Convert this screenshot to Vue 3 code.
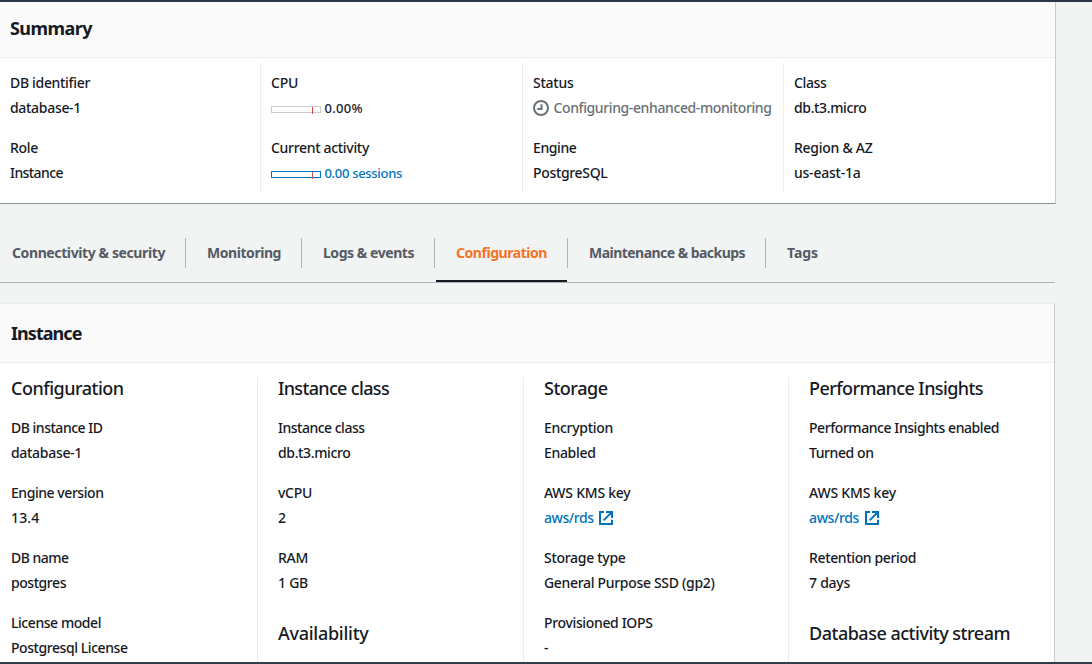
<script setup>
const summary = [
  [
    { label: 'DB identifier', lw: 80, value: 'database-1', vw: 71 },
    { label: 'Role', lw: 28, value: 'Instance', vw: 53 },
  ],
  [
    { label: 'CPU', lw: 27, value: '0.00%', vw: 38.5, kind: 'meter' },
    { label: 'Current activity', lw: 98, value: '0.00 sessions', vw: 77.5, kind: 'meter', link: true },
  ],
  [
    { label: 'Status', lw: 40.5, value: 'Configuring-enhanced-monitoring', vw: 218, kind: 'pending' },
    { label: 'Engine', lw: 43.5, value: 'PostgreSQL', vw: 74.5 },
  ],
  [
    { label: 'Class', lw: 32.5, value: 'db.t3.micro', vw: 72.5 },
    { label: 'Region & AZ', lw: 78.5, value: 'us-east-1a', vw: 66.5 },
  ],
]

const tabs = [
  { text: 'Connectivity & security', w: 153 },
  { text: 'Monitoring', w: 74 },
  { text: 'Logs & events', w: 91 },
  { text: 'Configuration', w: 91, active: true },
  { text: 'Maintenance & backups', w: 156 },
  { text: 'Tags', w: 31 },
]

const details = [
  {
    title: 'Configuration', tw: 112.5,
    items: [
      { label: 'DB instance ID', lw: 91.5, value: 'database-1', vw: 71 },
      { label: 'Engine version', lw: 92.5, value: '13.4', vw: 28.5 },
      { label: 'DB name', lw: 57.5, value: 'postgres', vw: 55 },
      { label: 'License model', lw: 90, value: 'Postgresql License', vw: 116.5 },
    ],
  },
  {
    title: 'Instance class', tw: 111,
    items: [
      { label: 'Instance class', lw: 86.5, value: 'db.t3.micro', vw: 72.5 },
      { label: 'vCPU', lw: 34, value: '2', vw: 8 },
      { label: 'RAM', lw: 30, value: '1 GB', vw: 30 },
    ],
    next: 'Availability', nw: 90.5,
  },
  {
    title: 'Storage', tw: 63.5,
    items: [
      { label: 'Encryption', lw: 69, value: 'Enabled', vw: 51.5 },
      { label: 'AWS KMS key', lw: 86.5, value: 'aws/rds', vw: 49.5, kind: 'external' },
      { label: 'Storage type', lw: 81.5, value: 'General Purpose SSD (gp2)', vw: 170.5 },
      { label: 'Provisioned IOPS', lw: 108.5, value: '-', vw: 5 },
    ],
  },
  {
    title: 'Performance Insights', tw: 174,
    items: [
      { label: 'Performance Insights enabled', lw: 190, value: 'Turned on', vw: 64.5 },
      { label: 'AWS KMS key', lw: 87, value: 'aws/rds', vw: 50, kind: 'external' },
      { label: 'Retention period', lw: 107, value: '7 days', vw: 41 },
    ],
    next: 'Database activity stream', nw: 201,
  },
]

// Tracks a run of text so that it fills the given width.
const vFit = {
  mounted(el, { value }) {
    const natural = el.getBoundingClientRect().width
    el.style.letterSpacing = `${(value - natural) / el.textContent.length}px`
  },
}
</script>

<template>
  <div class="page">
    <section class="panel summary">
      <header class="head"><h2><span v-fit="82">Summary</span></h2></header>
      <div class="cols">
        <div v-for="(col, i) in summary" :key="i" class="col">
          <div v-for="item in col" :key="item.label" class="item">
            <div class="line"><span v-fit="item.lw">{{ item.label }}</span></div>
            <div class="line" :class="[item.kind, { link: item.link }]">
              <i v-if="item.kind === 'meter'" class="bar"></i>
              <svg v-if="item.kind === 'pending'" class="clock" viewBox="0 0 16 16">
                <circle cx="8" cy="8" r="7" />
                <path d="M8.5 4.2V9H4.3" />
              </svg>
              <span v-fit="item.vw">{{ item.value }}</span>
            </div>
          </div>
        </div>
      </div>
    </section>

    <nav class="tabs">
      <a v-for="tab in tabs" :key="tab.text" class="tab" :class="{ active: tab.active }">
        <span v-fit="tab.w">{{ tab.text }}</span>
      </a>
    </nav>

    <section class="panel instance">
      <header class="head"><h2><span v-fit="70.5">Instance</span></h2></header>
      <div class="cols">
        <div v-for="col in details" :key="col.title" class="col">
          <h3><span v-fit="col.tw">{{ col.title }}</span></h3>
          <div v-for="item in col.items" :key="item.label" class="item">
            <div class="line"><span v-fit="item.lw">{{ item.label }}</span></div>
            <div class="line" :class="{ link: item.kind }">
              <span v-fit="item.vw">{{ item.value }}</span>
              <svg v-if="item.kind" class="ext" viewBox="0 0 14 14">
                <path d="M5 1H1v12h12V8.8M7 1h6v6M12.6 1.4L4.6 9.4" />
              </svg>
            </div>
          </div>
          <h3 v-if="col.next" class="next"><span v-fit="col.nw">{{ col.next }}</span></h3>
        </div>
      </div>
    </section>
  </div>
</template>

<style>
body {
  margin: 0;
  overflow: hidden;
}
</style>

<style scoped>
.page {
  box-sizing: border-box;
  width: 1092px;
  height: 664px;
  overflow: hidden;
  display: flex;
  flex-direction: column;
  border-top: 2px solid #2b3648;
  border-bottom: 2px solid #323d4c;
  background: #f2f3f3;
  color: #16191f;
  font: 500 14px/25px "Noto Sans", "Open Sans", sans-serif;
  white-space: nowrap;
}
.panel {
  box-sizing: border-box;
  flex: none;
  background: #fff;
}
.head {
  box-sizing: border-box;
  display: flex;
  align-items: center;
  background: #fafafa;
  border-bottom: 1px solid #eaeded;
}
h2, h3 {
  margin: 0;
  font-size: 18px;
  line-height: 25px;
}
h2 { font-weight: 700; }
h3 { font-weight: 500; }
.cols {
  display: grid;
}
.col {
  box-sizing: border-box;
  border-left: 1px solid #eaeded;
}
.col:first-child { border-left: 0; }
.line {
  display: flex;
  align-items: center;
  height: 25px;
}
.item { margin-bottom: 15px; }

.summary {
  width: 1056px;
  height: 202px;
  border-right: 1px solid #c7cdcd;
  border-bottom: 1px solid #879596;
}
.summary .head {
  height: 56px;
  padding: 0 0 3px 10px;
}
.summary .cols {
  grid-template-columns: 260px 262px 261px 1fr;
  padding-top: 5px;
}
.summary .col {
  height: 130px;
  padding: 7px 0 0 10px;
}
.meter { font-size: 13px; }
.meter span { padding-top: 2px; }
.bar {
  position: relative;
  box-sizing: border-box;
  width: 50px;
  height: 7px;
  margin: 3px 3.5px 0 0;
  border: 1px solid #ccc;
}
.bar::after {
  content: "";
  position: absolute;
  left: 40px;
  top: 0;
  width: 1px;
  height: 7px;
  background: #d9484b;
}
.link { color: #0073bb; }
.link .bar { border-color: #0073bb; }
.pending { color: #687078; }
.clock {
  width: 16px;
  height: 16px;
  margin-right: 4.5px;
}
.clock, .ext {
  flex: none;
  fill: none;
  stroke: currentColor;
  stroke-width: 2;
}

.tabs {
  box-sizing: border-box;
  flex: none;
  display: flex;
  width: 1055px;
  height: 46px;
  margin-top: 33px;
  padding-left: 12px;
  border-bottom: 1px solid #aab7b8;
  color: #545b64;
  font-weight: 700;
}
.tab {
  box-sizing: border-box;
  position: relative;
  display: flex;
  height: 45px;
  padding: 3px 20px 0 0;
  line-height: 25px;
}
.tab + .tab { padding-left: 22px; }
.tab:not(:last-child)::after {
  content: "";
  position: absolute;
  top: 1px;
  right: -1px;
  width: 1px;
  height: 30px;
  background: #aab7b8;
}
.active { color: #f47424; }
.active::before {
  content: "";
  position: absolute;
  left: 2px;
  right: 0;
  bottom: 0;
  height: 2px;
  background: #16191f;
}

.instance {
  width: 1055px;
  height: 400px;
  margin-top: 20px;
  border-top: 1px solid #eaeded;
  border-right: 1px solid #c7cdcd;
}
.instance .head {
  height: 59px;
  padding: 0 0 0 11px;
}
.instance .cols {
  grid-template-columns: 257px 266px 265px 1fr;
  padding-top: 14px;
}
.instance .col {
  height: 330px;
  padding-left: 20px;
}
.instance .col:first-child { padding-left: 11px; }
.instance h3 {
  margin: -1px 0 14px;
}
.instance h3.next { margin-top: 26px; }
.ext {
  width: 14px;
  height: 14px;
  margin: 1px 0 0 5.5px;
}
</style>
